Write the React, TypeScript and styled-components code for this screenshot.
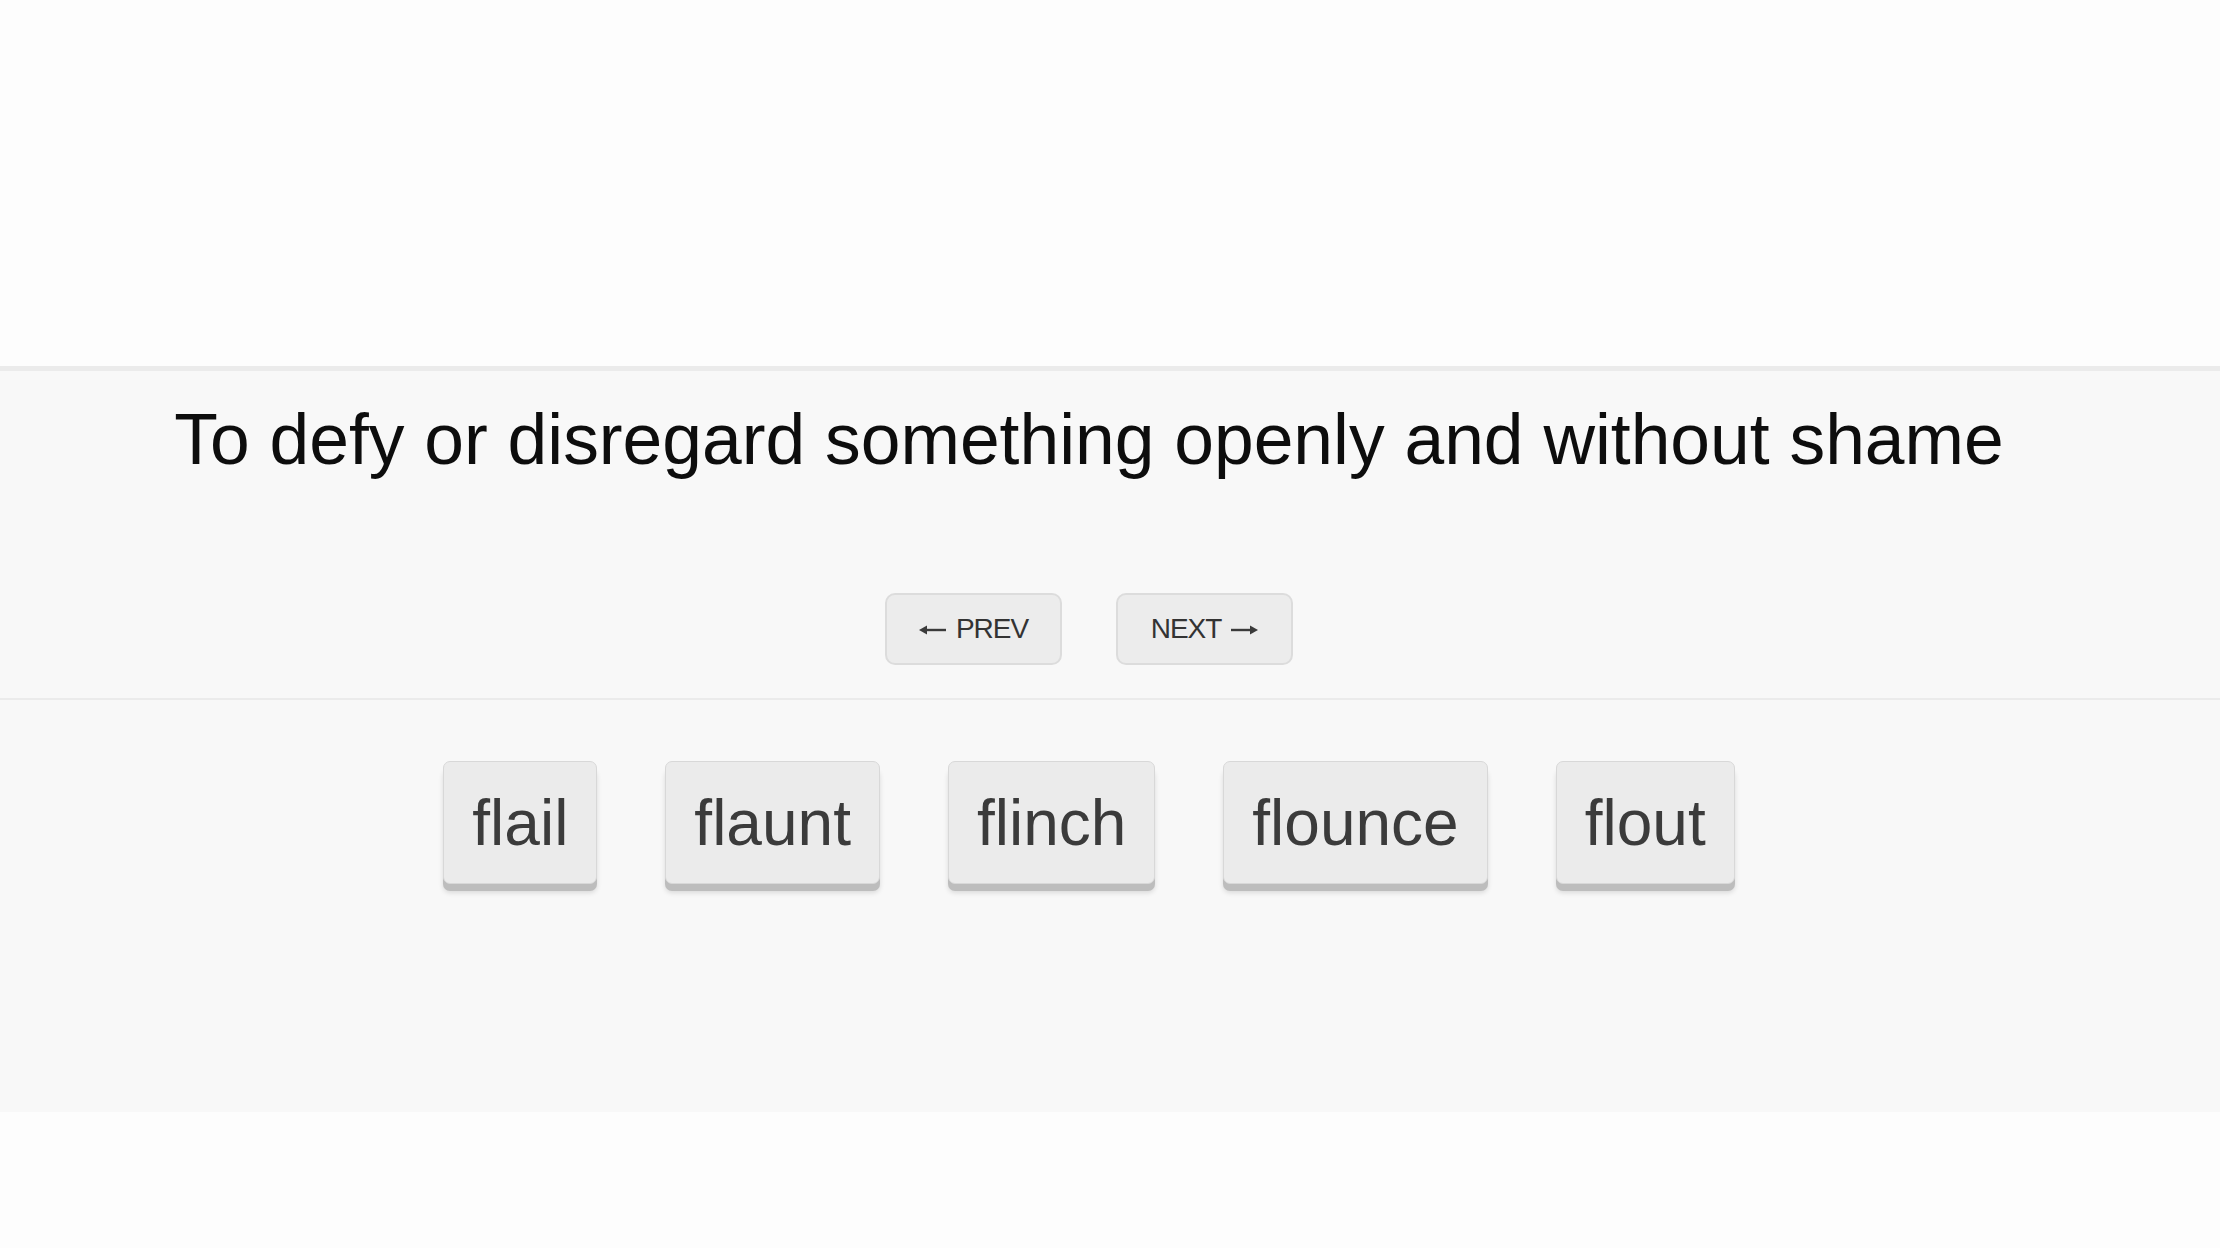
import styled, { createGlobalStyle } from "styled-components";

const GlobalStyle = createGlobalStyle`
  html, body {
    margin: 0;
    padding: 0;
    background: #fdfdfd;
    font-family: "Liberation Sans", Arial, Helvetica, sans-serif;
  }
`;

const Page = styled.div`
  width: 2220px;
  height: 1248px;
  background: #fdfdfd;
  padding-top: 366px;
  box-sizing: border-box;
`;

const Card = styled.div`
  background: #f8f8f8;
  border-top: 5px solid #ebebeb;
`;

const DefinitionSection = styled.section`
  padding: 32px 42px 33px 0;
  border-bottom: 2px solid #ebebeb;
  text-align: center;
`;

const Definition = styled.h1`
  margin: 0;
  font-size: 71.4px;
  line-height: 72px;
  font-weight: 400;
  color: #0d0d0d;
`;

const NavRow = styled.div`
  display: flex;
  justify-content: center;
  gap: 54px;
  margin-top: 118px;
`;

const NavButton = styled.button`
  width: 177px;
  height: 72px;
  box-sizing: border-box;
  border: 2px solid #dcdcdc;
  border-radius: 10px;
  background: #ececec;
  color: #333;
  font-family: "Liberation Sans", Arial, sans-serif;
  font-size: 28px;
  letter-spacing: -1px;
  display: flex;
  align-items: center;
  justify-content: center;
  gap: 9px;
  padding: 0;
  cursor: pointer;
`;

const ArrowIcon = styled.svg`
  width: 28px;
  height: 12px;
  flex: none;
  margin-top: 2px;
`;

function Arrow({ dir }: { dir: "left" | "right" }) {
  return (
    <ArrowIcon viewBox="0 0 28 12">
      <g transform={dir === "right" ? "translate(28 0) scale(-1 1)" : undefined}>
        <line x1="5" y1="6" x2="27" y2="6" stroke="#3a3a3a" strokeWidth="2.4" />
        <polygon points="0,6 8,1.5 8,10.5" fill="#3a3a3a" />
      </g>
    </ArrowIcon>
  );
}

const WordsSection = styled.section`
  padding: 61px 42px 228px 0;
  display: flex;
  justify-content: center;
  gap: 68px;
`;

const WordButton = styled.button`
  height: 123px;
  padding: 0 28px;
  box-sizing: border-box;
  border: 1px solid #d8d8d8;
  border-radius: 7px;
  background: #ebebeb;
  color: #3b3b3b;
  font-family: "Liberation Sans", Arial, sans-serif;
  font-size: 64px;
  box-shadow: 0 7px 0 #bdbdbd, 0 9px 5px rgba(0, 0, 0, 0.12);
  cursor: pointer;
`;

const words = ["flail", "flaunt", "flinch", "flounce", "flout"];

function App() {
  return (
    <>
      <GlobalStyle />
      <Page>
        <Card>
          <DefinitionSection>
            <Definition>To defy or disregard something openly and without shame</Definition>
            <NavRow>
              <NavButton>
                <Arrow dir="left" />
                PREV
              </NavButton>
              <NavButton>
                NEXT
                <Arrow dir="right" />
              </NavButton>
            </NavRow>
          </DefinitionSection>
          <WordsSection>
            {words.map((w) => (
              <WordButton key={w}>{w}</WordButton>
            ))}
          </WordsSection>
        </Card>
      </Page>
    </>
  );
}

export default App;
